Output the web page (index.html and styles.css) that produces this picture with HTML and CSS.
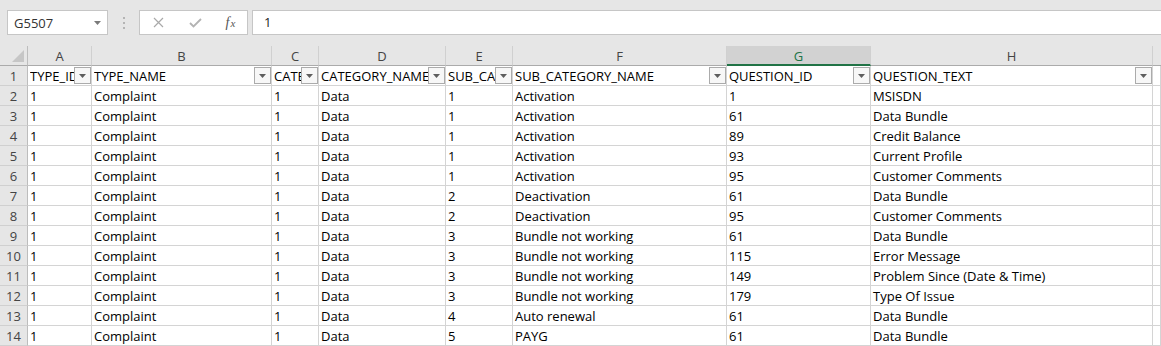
FILE: index.html
```html
<!DOCTYPE html>
<html lang="en">
<head>
    <meta charset="UTF-8">
    <title>QUESTIONS - Excel</title>
    <link rel="stylesheet" href="styles.css">
</head>
<body>
    <div class="formula-bar">
        <div class="name-box">
            <span>G5507</span>
            <svg width="7" height="4" viewBox="0 0 7 4"><polygon points="0,0 7,0 3.5,4" fill="#7a7a7a"/></svg>
        </div>
        <div class="grip"><i></i><i></i><i></i></div>
        <div class="fx-buttons">
            <span class="fx-btn">
                <svg width="11" height="11" viewBox="0 0 11 11"><path d="M1 1L10 10M10 1L1 10" stroke="#a9a9a9" stroke-width="1.2" fill="none"/></svg>
            </span>
            <span class="fx-btn">
                <svg width="13" height="10" viewBox="0 0 13 10"><path d="M1 5L4.5 8.5L12 1" stroke="#b3b3b3" stroke-width="1.8" fill="none"/></svg>
            </span>
            <span class="fx-btn fx-label"><em>f</em><small>x</small></span>
        </div>
        <div class="formula-input">1</div>
    </div>

    <div class="sheet">
        <div class="row col-heads">
            <div class="corner"><svg width="12" height="12" viewBox="0 0 12 12"><polygon points="12,0 12,12 0,12" fill="#c6c6c6"/></svg></div>
            <div>A</div><div>B</div><div>C</div><div>D</div><div>E</div><div>F</div>
            <div class="selected">G</div><div>H</div><div class="filler"></div>
        </div>

        <div class="row">
            <div class="rh">1</div>
            <div class="cell head"><span class="label">TYPE_ID</span><span class="filter"><svg width="7" height="4" viewBox="0 0 7 4"><polygon points="0,0 7,0 3.5,4" fill="#5e5e5e"/></svg></span></div>
            <div class="cell head"><span class="label">TYPE_NAME</span><span class="filter"><svg width="7" height="4" viewBox="0 0 7 4"><polygon points="0,0 7,0 3.5,4" fill="#5e5e5e"/></svg></span></div>
            <div class="cell head"><span class="label">CATEGORY_ID</span><span class="filter"><svg width="7" height="4" viewBox="0 0 7 4"><polygon points="0,0 7,0 3.5,4" fill="#5e5e5e"/></svg></span></div>
            <div class="cell head"><span class="label">CATEGORY_NAME</span><span class="filter"><svg width="7" height="4" viewBox="0 0 7 4"><polygon points="0,0 7,0 3.5,4" fill="#5e5e5e"/></svg></span></div>
            <div class="cell head"><span class="label">SUB_CATEGORY_ID</span><span class="filter"><svg width="7" height="4" viewBox="0 0 7 4"><polygon points="0,0 7,0 3.5,4" fill="#5e5e5e"/></svg></span></div>
            <div class="cell head"><span class="label">SUB_CATEGORY_NAME</span><span class="filter"><svg width="7" height="4" viewBox="0 0 7 4"><polygon points="0,0 7,0 3.5,4" fill="#5e5e5e"/></svg></span></div>
            <div class="cell head"><span class="label">QUESTION_ID</span><span class="filter"><svg width="7" height="4" viewBox="0 0 7 4"><polygon points="0,0 7,0 3.5,4" fill="#5e5e5e"/></svg></span></div>
            <div class="cell head"><span class="label">QUESTION_TEXT</span><span class="filter"><svg width="7" height="4" viewBox="0 0 7 4"><polygon points="0,0 7,0 3.5,4" fill="#5e5e5e"/></svg></span></div>
            <div class="cell"></div>
        </div>

        <div class="row"><div class="rh">2</div><div class="cell">1</div><div class="cell">Complaint</div><div class="cell">1</div><div class="cell">Data</div><div class="cell">1</div><div class="cell">Activation</div><div class="cell">1</div><div class="cell">MSISDN</div><div class="cell"></div></div>
        <div class="row"><div class="rh">3</div><div class="cell">1</div><div class="cell">Complaint</div><div class="cell">1</div><div class="cell">Data</div><div class="cell">1</div><div class="cell">Activation</div><div class="cell">61</div><div class="cell">Data Bundle</div><div class="cell"></div></div>
        <div class="row"><div class="rh">4</div><div class="cell">1</div><div class="cell">Complaint</div><div class="cell">1</div><div class="cell">Data</div><div class="cell">1</div><div class="cell">Activation</div><div class="cell">89</div><div class="cell">Credit Balance</div><div class="cell"></div></div>
        <div class="row"><div class="rh">5</div><div class="cell">1</div><div class="cell">Complaint</div><div class="cell">1</div><div class="cell">Data</div><div class="cell">1</div><div class="cell">Activation</div><div class="cell">93</div><div class="cell">Current Profile</div><div class="cell"></div></div>
        <div class="row"><div class="rh">6</div><div class="cell">1</div><div class="cell">Complaint</div><div class="cell">1</div><div class="cell">Data</div><div class="cell">1</div><div class="cell">Activation</div><div class="cell">95</div><div class="cell">Customer Comments</div><div class="cell"></div></div>
        <div class="row"><div class="rh">7</div><div class="cell">1</div><div class="cell">Complaint</div><div class="cell">1</div><div class="cell">Data</div><div class="cell">2</div><div class="cell">Deactivation</div><div class="cell">61</div><div class="cell">Data Bundle</div><div class="cell"></div></div>
        <div class="row"><div class="rh">8</div><div class="cell">1</div><div class="cell">Complaint</div><div class="cell">1</div><div class="cell">Data</div><div class="cell">2</div><div class="cell">Deactivation</div><div class="cell">95</div><div class="cell">Customer Comments</div><div class="cell"></div></div>
        <div class="row"><div class="rh">9</div><div class="cell">1</div><div class="cell">Complaint</div><div class="cell">1</div><div class="cell">Data</div><div class="cell">3</div><div class="cell">Bundle not working</div><div class="cell">61</div><div class="cell">Data Bundle</div><div class="cell"></div></div>
        <div class="row"><div class="rh">10</div><div class="cell">1</div><div class="cell">Complaint</div><div class="cell">1</div><div class="cell">Data</div><div class="cell">3</div><div class="cell">Bundle not working</div><div class="cell">115</div><div class="cell">Error Message</div><div class="cell"></div></div>
        <div class="row"><div class="rh">11</div><div class="cell">1</div><div class="cell">Complaint</div><div class="cell">1</div><div class="cell">Data</div><div class="cell">3</div><div class="cell">Bundle not working</div><div class="cell">149</div><div class="cell">Problem Since (Date &amp; Time)</div><div class="cell"></div></div>
        <div class="row"><div class="rh">12</div><div class="cell">1</div><div class="cell">Complaint</div><div class="cell">1</div><div class="cell">Data</div><div class="cell">3</div><div class="cell">Bundle not working</div><div class="cell">179</div><div class="cell">Type Of Issue</div><div class="cell"></div></div>
        <div class="row"><div class="rh">13</div><div class="cell">1</div><div class="cell">Complaint</div><div class="cell">1</div><div class="cell">Data</div><div class="cell">4</div><div class="cell">Auto renewal</div><div class="cell">61</div><div class="cell">Data Bundle</div><div class="cell"></div></div>
        <div class="row"><div class="rh">14</div><div class="cell">1</div><div class="cell">Complaint</div><div class="cell">1</div><div class="cell">Data</div><div class="cell">5</div><div class="cell">PAYG</div><div class="cell">61</div><div class="cell">Data Bundle</div><div class="cell"></div></div>
    </div>
</body>
</html>
```

FILE: styles.css
```css
body {
    margin: 0;
    font-family: "Open Sans", "Liberation Sans", sans-serif;
    font-size: 13px;
    color: #000;
    background: #e6e6e6;
    overflow: hidden;
}

/* formula bar */
.formula-bar {
    display: flex;
    align-items: flex-start;
    height: 46px;
    padding-top: 10px;
    box-sizing: border-box;
}
.name-box {
    margin-left: 7px;
    width: 101px;
    height: 25px;
    box-sizing: border-box;
    border: 1px solid #c6c6c6;
    background: #fff;
    display: flex;
    align-items: center;
    justify-content: space-between;
    padding: 0 6px 0 6px;
    color: #333;
}
.grip {
    display: flex;
    flex-direction: column;
    gap: 3px;
    margin: 7px 0 0 15px;
}
.grip i {
    display: block;
    width: 2px;
    height: 2px;
    background: #b4b4b4;
}
.fx-buttons {
    margin-left: 14px;
    width: 109px;
    height: 25px;
    box-sizing: border-box;
    border: 1px solid #c6c6c6;
    background: #fff;
    display: flex;
    align-items: center;
}
.fx-btn {
    width: 37px;
    display: flex;
    justify-content: center;
    align-items: center;
}
.fx-label {
    width: 33px;
    font-family: "Liberation Serif", serif;
    color: #555;
    font-size: 14px;
}
.fx-label small {
    font-style: italic;
    font-size: 11px;
    margin-left: 1px;
}
.formula-input {
    flex: 1;
    margin-left: 4px;
    height: 25px;
    box-sizing: border-box;
    border: 1px solid #c6c6c6;
    border-right: none;
    background: #fff;
    padding-left: 11px;
    line-height: 23px;
    color: #222;
}

/* grid */
.sheet {
    background: #fff;
}
.row {
    display: grid;
    grid-template-columns: 28px 64px 180px 47px 127px 67px 214px 144px 282px 1fr;
    height: 20px;
}
.row > div {
    box-sizing: border-box;
    border-right: 1px solid #d4d4d4;
    border-bottom: 1px solid #d4d4d4;
    white-space: nowrap;
    overflow: hidden;
    line-height: 21px;
}
.cell {
    padding: 0 2px;
    position: relative;
}
.head .label {
    display: block;
    overflow: hidden;
    margin-right: 15px;
}
.rh {
    background: #e6e6e6;
    text-align: center;
    color: #444;
    border-right-color: #bdbdbd !important;
    border-bottom-color: #d0d0d0 !important;
}

.col-heads > div {
    background: #e6e6e6;
    text-align: center;
    color: #444;
    border-right-color: #d0d0d0;
    border-bottom-color: #ababab;
}
.col-heads .corner {
    display: flex;
    justify-content: flex-end;
    align-items: flex-end;
    padding: 0 3px 3px 0;
    border-right-color: #bdbdbd;
}
.col-heads .selected {
    background: #d2d2d2;
    color: #217346;
    border-bottom: 2px solid #217346;
}
.col-heads .filler {
    border-right: none;
}

.filter {
    position: absolute;
    top: 1px;
    right: 0;
    width: 17px;
    height: 17px;
    box-sizing: border-box;
    border: 1px solid #ababab;
    background: #f7f7f7;
    display: flex;
    align-items: center;
    justify-content: center;
}
```
